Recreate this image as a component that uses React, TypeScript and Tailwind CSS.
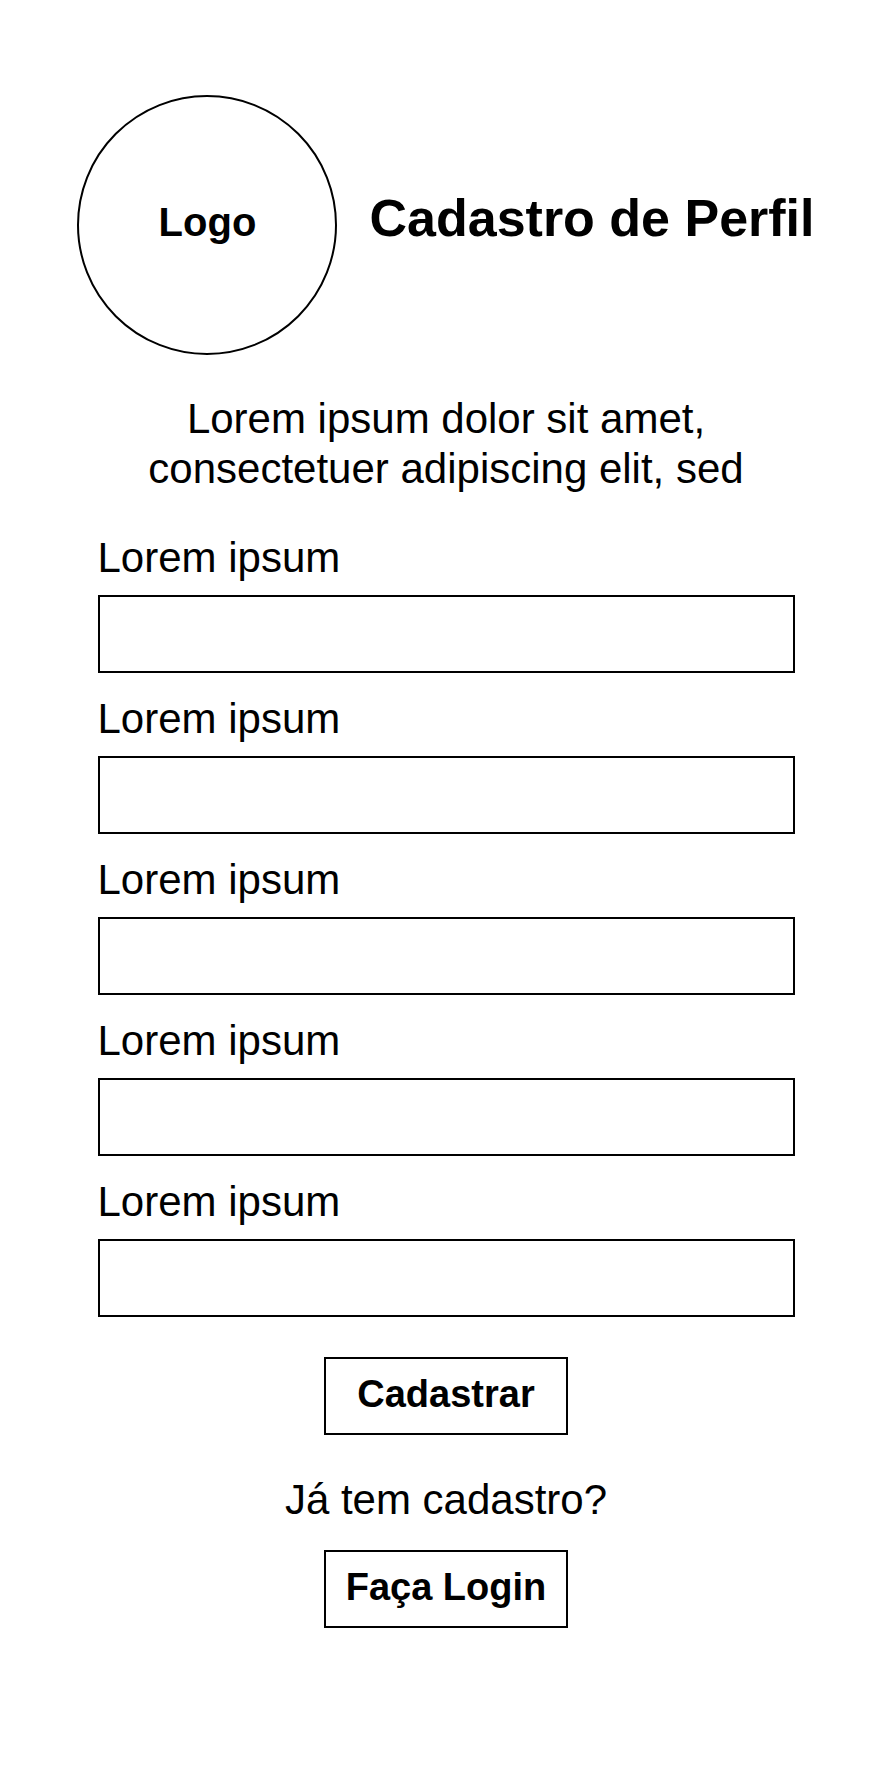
import { FormEvent } from 'react';

const campos = ['nome', 'email', 'telefone', 'senha', 'confirmar'];

export default function App() {
  const handleSubmit = (e: FormEvent) => {
    e.preventDefault();
  };

  return (
    <div className="min-h-screen bg-white text-black font-['Liberation_Sans',Arial,sans-serif]">
      {/* Cabeçalho com logo e título */}
      <header className="flex items-center justify-center gap-8 pt-[95px]">
        <div className="flex h-[260px] w-[260px] items-center justify-center rounded-full border-2 border-black">
          <span className="mb-[6px] text-[40px] font-bold">Logo</span>
        </div>
        <h1 className="mb-[14px] text-[52px] font-bold leading-none">Cadastro de Perfil</h1>
      </header>

      <p className="mt-[39px] text-center text-[42px] leading-[50px]">
        Lorem ipsum dolor sit amet,
        <br />
        consectetuer adipiscing elit, sed
      </p>

      <form onSubmit={handleSubmit} className="mx-auto mt-[39px] flex w-[697px] flex-col items-center">
        <div className="flex w-full flex-col gap-[21px]">
          {campos.map((campo) => (
            <label key={campo} className="flex flex-col gap-3">
              <span className="text-[42px] leading-[50px]">Lorem ipsum</span>
              <input
                name={campo}
                className="h-[78px] w-full border-2 border-black bg-white px-3 text-[32px] outline-none"
              />
            </label>
          ))}
        </div>

        <button
          type="submit"
          className="mt-10 flex h-[78px] w-[244px] items-center justify-center border-2 border-black bg-white pb-1 text-[38px] font-bold"
        >
          Cadastrar
        </button>

        <p className="mt-[40px] text-center text-[42px] leading-[50px]">Já tem cadastro?</p>

        <button
          type="button"
          className="mt-[25px] flex h-[78px] w-[244px] items-center justify-center border-2 border-black bg-white pb-1 text-[38px] font-bold"
        >
          Faça Login
        </button>
      </form>
    </div>
  );
}
